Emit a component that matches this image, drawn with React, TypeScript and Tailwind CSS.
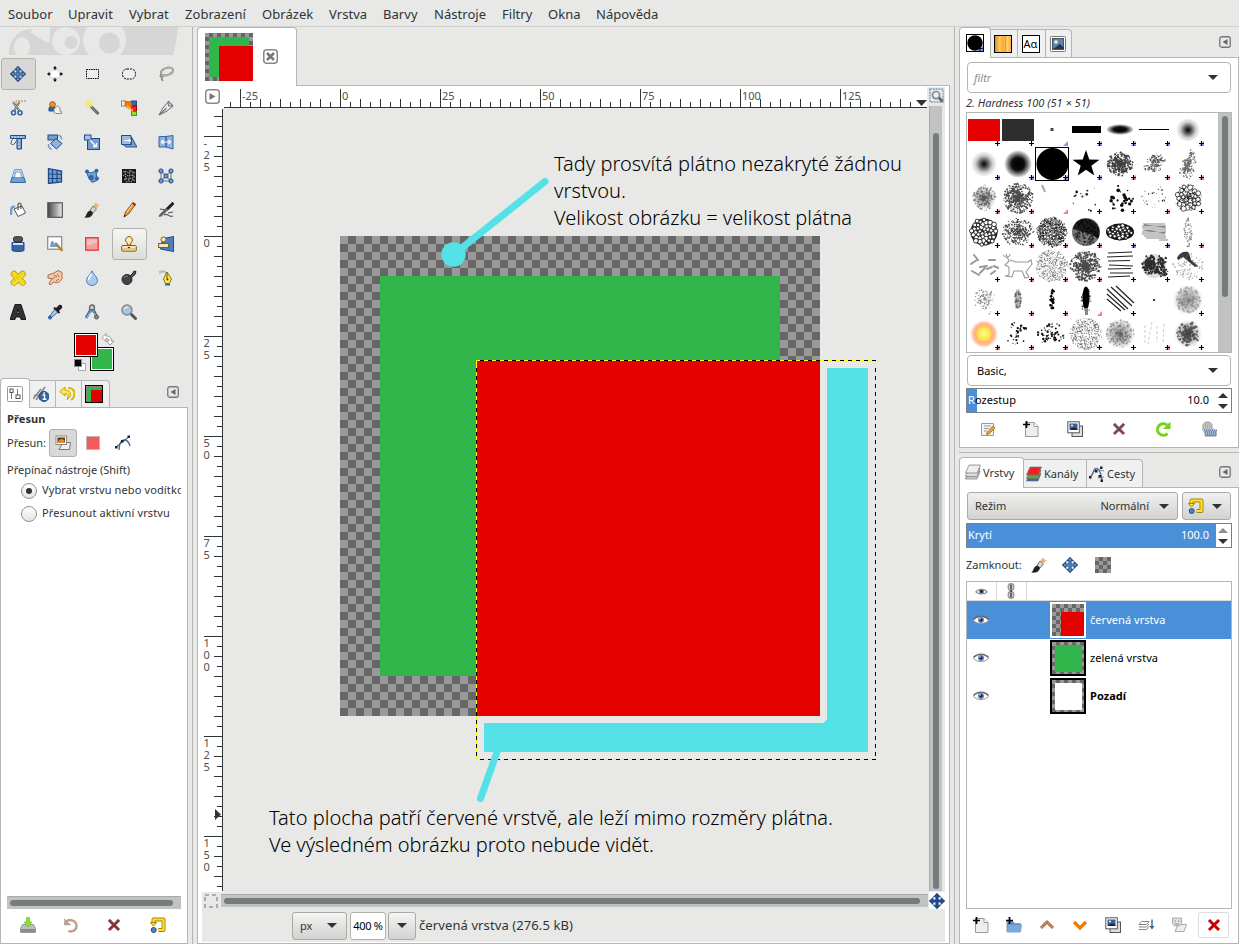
import React from "react";

type Kids = { children?: React.ReactNode };

function Ico({ children, s = 16 }: Kids & { s?: number }) {
  return (
    <svg width={s} height={s} viewBox="0 0 16 16" fill="none" className="block shrink-0">
      {children}
    </svg>
  );
}

const B = "#204a87";
const L = "#729fcf";

function Checker({ id, size }: { id: string; size: number }) {
  return (
    <pattern id={id} width={size * 2} height={size * 2} patternUnits="userSpaceOnUse">
      <rect width={size * 2} height={size * 2} fill="#999" />
      <rect x={size} width={size} height={size} fill="#666" />
      <rect y={size} width={size} height={size} fill="#666" />
    </pattern>
  );
}

/* ---------- icons ---------- */

const MoveIcon = ({ s, fill = L }: { s?: number; fill?: string }) => (
  <Ico s={s}>
    <path d="M8 .6 11 3.8H9V7h3.2V5l3.2 3-3.2 3V9H9v3.2h2L8 15.4 5 12.2h2V9H3.8v2L.6 8l3.2-3v2H7V3.8H5z" fill={fill} stroke={B} strokeWidth="1.1" />
  </Ico>
);
const AlignIcon = () => (
  <Ico>
    <rect x="3.500" y="4.500" width="9" height="7" fill="#fff" stroke="#ddd" />
    <path d="M8 0 10 2.500H6zM8 16l2-2.500H6zM0 8l2.500-2v4zM16 8l-2.500-2v4z" fill="#000" />
    <path d="M8 2v2M8 12v2M2 8h1.500M12.500 8H14" stroke="#000" />
  </Ico>
);
const RectSel = () => (
  <Ico>
    <rect x="2.500" y="3.500" width="12" height="9" fill="#eee" stroke="#000" strokeDasharray="1.500 .8" />
  </Ico>
);
const EllipseSel = () => (
  <Ico>
    <rect x="1.500" y="3" width="13" height="10" rx="4.500" fill="#eee" stroke="#000" strokeDasharray="2 1" />
  </Ico>
);
const Lasso = () => (
  <Ico>
    <ellipse cx="9" cy="5.500" rx="6.300" ry="3.600" transform="rotate(-18 9 5.500)" stroke="#888a85" strokeWidth="2" />
    <ellipse cx="9" cy="5.500" rx="6.300" ry="3.600" transform="rotate(-18 9 5.500)" stroke="#d3d7cf" strokeWidth=".6" />
    <path d="M3.500 8c-3 2 0 4 2 2.500M4 10l-.5 2.500 1.500 2.500" stroke="#888a85" strokeWidth="1.500" />
  </Ico>
);
const Scissors = () => (
  <Ico>
    <path d="M6 5V1h10" stroke="#c17d11" strokeDasharray="2 1" />
    <path d="M3 2 9.500 11M9.500 2 4 11" stroke="#555753" strokeWidth="2" />
    <path d="M3 2 9.500 11M9.500 2 4 11" stroke="#d3d7cf" strokeWidth=".7" />
    <circle cx="3.500" cy="12.700" r="2" stroke="#3465a4" strokeWidth="1.600" />
    <circle cx="10" cy="12.700" r="2" stroke="#3465a4" strokeWidth="1.600" />
  </Ico>
);
const Foreground = () => (
  <Ico>
    <path d="M2 10V8c0-2 6-2 7 0v3H2z" fill="#3465a4" stroke={B} />
    <circle cx="5.500" cy="4.500" r="2.800" fill="#f5913e" stroke="#8f5902" />
    <path d="M7 12.500V9l2-2c2-2 4 0 4 2v2l1.500.5v2h-6z" fill="#eee" stroke="#888a85" />
  </Ico>
);
const Wand = () => (
  <Ico>
    <circle cx="5" cy="4" r="4" fill="#fce94f" opacity=".35" />
    <path d="M7 6.500 14.500 14" stroke="#555753" strokeWidth="2.800" />
    <path d="m6.500 6 7.500 7.500" stroke="#babdb6" strokeWidth=".8" />
    <path d="M5 0v8M1 4h8M2.200 1.200l5.600 5.600M7.800 1.200 2.200 6.800" stroke="#fce94f" strokeWidth=".9" />
  </Ico>
);
const ByColor = () => (
  <Ico>
    <rect x=".5" y="1" width="4" height="5" fill="#eee" stroke="#888a85" />
    <rect x="10.500" y="1" width="5" height="4.500" fill="#3465a4" stroke={B} />
    <rect x="10.500" y="6" width="5" height="5" fill="#ef2929" stroke="#a40000" />
    <rect x="10.500" y="11.500" width="5" height="4" fill="#8ae234" stroke="#4e9a06" />
    <path d="M4 1.500h6l1 5-4 2-3-3z" fill="#f57900" stroke="#ce5c00" strokeWidth=".7" />
    <path d="m6 6 6 5" stroke="#fcaf3e" strokeWidth="2" />
  </Ico>
);
const PathPen = () => (
  <Ico>
    <path d="m1 15 4-7 5-6 .5 4L15 6l-6 5z" fill="#eee" stroke="#666" />
    <path d="M2 14.500 8.500 8M10 1l5 5" stroke="#777" strokeWidth="1.200" />
  </Ico>
);
const Crop = () => (
  <Ico>
    <path d="M.5 1.500h15v3H.5z" fill={L} stroke={B} />
    <path d="M7 4.500V15h4.500V4.500z" fill={L} stroke={B} />
    <path d="M2.500 5.500c-2 3-2 5 0 5s3-2 4-4" fill="#eee" stroke={B} />
    <path d="M1 3h13M9 6v8" stroke="#dce8f6" strokeDasharray="2 1" />
  </Ico>
);
const Rotate = () => (
  <Ico>
    <rect x="1" y="1" width="9.500" height="5" fill={L} stroke={B} />
    <path d="m9 4.500 6 5-5.500 5.500-6-5.500z" fill="#8fb3df" stroke={B} />
    <path d="M11.500 1.500c3 0 3 2 3 4M1.500 10c0 4 1 5 3.500 5" stroke={L} strokeWidth="1.600" />
  </Ico>
);
const Scale = () => (
  <Ico>
    <rect x="3.500" y="4.500" width="12" height="11" fill={L} stroke={B} />
    <rect x=".5" y="1" width="6.500" height="5" fill="#a7c4e6" stroke={B} />
    <path d="m6 6 6 6.500M12.500 9v3.500H9" stroke="#fff" strokeWidth="1.300" />
  </Ico>
);
const Shear = () => (
  <Ico>
    <path d="M.5 1.500h9.500v9H.5z" fill="#9bbce3" stroke={B} />
    <path d="M2 10.500 5 13h11L10.500 3v7.500z" fill={L} stroke={B} strokeWidth=".9" />
    <path d="M3.500 6.500h6M8 5l2 1.500L8 8" stroke="#fff" />
  </Ico>
);
const Flip = () => (
  <Ico>
    <path d="M1 2.500h7V13H1zM8 2.500l7-1v13.500l-7-2z" fill="#8fb3df" stroke="#3465a4" />
    <path d="M4 8h8M5.500 6 3.500 8l2 2M10.500 6l2 2-2 2" stroke="#fff" strokeWidth="1.200" />
  </Ico>
);
const Perspective = () => (
  <Ico>
    <path d="M4.500 1.500h7l2.500 8.500H2z" fill="#c5d8ee" stroke={L} />
    <path d="M2 9.500h12l1.500 5H.5z" fill={L} stroke="#3465a4" />
    <path d="M5.500 4h5l1 5.500h-7z" fill="#fff" stroke={L} />
  </Ico>
);
const Unified = () => (
  <Ico>
    <path d="m1.500 .7 13 2.300v11l-13 1.500z" fill={L} stroke={B} strokeWidth="1.300" />
    <path d="M5.500 1.500V15M10 2v12.500M1.500 6l13 .5M1.500 10.500h13" stroke={B} strokeWidth="1.200" />
  </Ico>
);
const Cage = () => (
  <Ico>
    <path d="M3 3.500c3 2 6 1 9-1l1 10-5 2C6 11 3 9 3 3.500z" fill={L} stroke="#3465a4" />
    <circle cx="3" cy="3.500" r="2" fill="#3465a4" />
    <circle cx="12.500" cy="2.700" r="2" fill="#3465a4" />
    <circle cx="13" cy="10.500" r="2" fill="#3465a4" />
    <circle cx="7" cy="9.500" r="2.600" fill="#3465a4" />
  </Ico>
);
const Warp = () => (
  <Ico>
    <rect x="1" y="1" width="14" height="14" fill="#1b1b1b" />
    <path d="m2 4 3-1 2 2 3-2 4 2M2 8l2-2 3 2 3-1 4 2M3 12l2-2 3 2 2-2 4 3M5 14l3-1 3 1M4 3l1 10M9 2l-1 9M12 4v9" stroke="#bbb" strokeWidth=".9" strokeDasharray="1.500 1" />
  </Ico>
);
const Handle = () => (
  <Ico>
    <path d="M3 3v10M13 3v10M3 3l10 10M13 3 3 13M3 13h10" stroke="#999" strokeWidth="1.500" />
    {[[3, 3], [13, 3], [3, 13], [13, 13], [8, 8]].map(([x, y]) => (
      <circle key={`${x}${y}`} cx={x} cy={y} r="2.100" fill={L} stroke={B} />
    ))}
  </Ico>
);
const Bucket = () => (
  <Ico>
    <path d="M5 5C1 4 1 7 1 13" stroke={L} strokeWidth="2.500" />
    <path d="m4 7 8-3 3.500 7L8 14.500z" fill="#fff" stroke="#555" />
    <path d="M8 8V2.500c0-2 3-2 3 0V7" stroke="#555" strokeWidth="1.200" />
  </Ico>
);
const Gradient = () => (
  <Ico>
    <defs>
      <linearGradient id="gr">
        <stop stopColor="#444" />
        <stop offset="1" stopColor="#eee" />
      </linearGradient>
    </defs>
    <rect x=".8" y=".8" width="14.500" height="14.500" fill="url(#gr)" stroke="#555" strokeWidth="1.200" />
  </Ico>
);
const Brush = () => (
  <Ico>
    <path d="m11.500.5 3.800 3.200-3 2.800L9.500 4z" fill="#e9b96e" />
    <path d="m9 4 3.500 3-3.500 4-3-2.500z" fill="#d3d7cf" stroke="#777" />
    <path d="M6.500 8.500 9 11c-1 4.500-5 5-9 4.500 3-1 2-6.500 6.500-7z" fill="#222" />
  </Ico>
);
const Pencil = () => (
  <Ico>
    <path d="m3 15 1.500-5L11 1.500 14 3 7.500 12z" fill="#e0a13c" stroke="#8f5902" />
    <path d="m11 1.500 1-1 2.500 1.500-.5 1.500z" fill="#ef2929" stroke="#a40000" strokeWidth=".8" />
    <path d="m6 10 6-8" stroke="#fce0a0" />
    <path d="m2.700 15.300.8-2.500 1.500 1z" fill="#222" />
  </Ico>
);
const Airbrush = () => (
  <Ico>
    <path d="m15.500.8-7 7" stroke="#222" strokeWidth="3" />
    <path d="m9 7-7 7" stroke="#777" strokeWidth="3" />
    <path d="m8 8-7 6.500M2 7l6 1M6 13c4-3 4 3 9 1M10 11l5-1" stroke="#555" strokeWidth="1.200" />
  </Ico>
);
const Ink = () => (
  <Ico>
    <path d="M2 6.500h12v8c-3 1.500-9 1.500-12 0z" fill="#3465a4" stroke={B} />
    <rect x="3.500" y=".8" width="9" height="5" rx="2" fill="#555753" stroke="#222" />
    <path d="M3 8h10" stroke="#cfe0f5" strokeWidth="2" />
  </Ico>
);
const MyPaint = () => (
  <Ico>
    <rect x=".7" y=".7" width="14" height="12.500" fill="#fff" stroke="#888" strokeWidth="1.200" />
    <path d="M3 11c1-7 2-8 4-4s1 2 4 0l-1 4z" fill={L} />
    <path d="m9 8 6.500 7" stroke="#c17d11" strokeWidth="2.400" />
    <path d="m8 7 3 3" stroke="#888" strokeWidth="2.400" />
  </Ico>
);
const Eraser = () => (
  <Ico>
    <rect x="1.700" y="1.700" width="12.500" height="12.500" fill="#f0a0a0" stroke="#ef2929" strokeWidth="1.200" />
    <path d="M3 3.500h10v3L3 10z" fill="#f7c0c0" />
  </Ico>
);
const Stamp = () => (
  <Ico>
    <rect x=".7" y="9.500" width="14.600" height="5.700" rx="1" fill="#f7e6b8" stroke="#8f5902" />
    <path d="M6.500 9 6 6.500c-3-1.500-1-6 2-6s5 4.500 2 6L9.500 9z" fill="#fbe9b7" stroke="#8f5902" />
    <path d="M1 13h14" stroke="#c9a64e" />
    <path d="m6.500 11 1.500 1.500L9.500 11z" fill="#222" />
  </Ico>
);
const PerspClone = () => (
  <Ico>
    <path d="m6 2.500 9.500-2V15.500l-13-2.500V9z" fill="#4b7fc0" stroke={B} />
    <rect x=".6" y="7.500" width="10" height="4" fill="#f7e6b8" stroke="#8f5902" />
    <circle cx="5.500" cy="3.500" r="2.500" fill="#fbe9b7" stroke="#8f5902" />
    <path d="M5.500 5.500v2" stroke="#8f5902" strokeWidth="2.500" />
  </Ico>
);
const Heal = () => (
  <Ico>
    <path d="m4 4 8.500 8.500M12.500 4 4 12.500" stroke="#c4a000" strokeWidth="6.600" strokeLinecap="round" />
    <path d="m4 4 8.500 8.500M12.500 4 4 12.500" stroke="#f6df2c" strokeWidth="4.800" strokeLinecap="round" />
    <path d="m3 4 9 10M5 2l9 10M13 3l-9 9M11 2l-8 9" stroke="#c4a000" strokeDasharray="1 1.500" strokeWidth=".8" />
  </Ico>
);
const Smudge = () => (
  <Ico>
    <path d="M3 15 2 13l3-4-4-1V5l6-2 4-2.500 4 2v6c-2 4-5 5-8 3.500z" fill="#f3c9a5" stroke="#a0522d" strokeWidth=".8" />
    <path d="m7 5 3 2M5 9l3-2M9 11l3-2M10 4l2 3" stroke="#a0522d" strokeWidth=".8" />
  </Ico>
);
const Drop = () => (
  <Ico>
    <path d="M8 .8C9 4 13.500 7 13.500 10.500a5.500 5 0 0 1-11 0C2.500 7 7 4 8 .8z" fill="#a8cbef" stroke="#5580b0" />
    <path d="M7.500 4c-2 3-3 4-3 6" stroke="#fff" strokeWidth="1.500" />
  </Ico>
);
const Dodge = () => (
  <Ico>
    <circle cx="6" cy="9.500" r="5" fill="#444" stroke="#222" />
    <path d="m9 6 3-3 1-2 2 .5-1 3-3.500 3z" fill="#555" stroke="#222" />
    <path d="M3 8c1-2 3-2 4-2" stroke="#888" />
  </Ico>
);
const Ink2 = () => (
  <Ico>
    <path d="M1 4c5-4 8-3 9 5M1 2c4-2 7-1 9 3" stroke="#aaa" />
    <path d="m9 2 4.500 7-2 4.500h-4L5.500 9z" fill="#fce94f" stroke="#8f7000" />
    <path d="M9 3v6" stroke="#555" />
    <circle cx="9.500" cy="9.500" r="1" fill="#333" />
    <rect x="7" y="13.500" width="5" height="2" fill="#3465a4" />
  </Ico>
);
const TextTool = () => (
  <Ico>
    <path d="M5 .5h6L16 15.500h-5l-.8-2.500H5.800L5 15.500H0zM8 5 6.800 9.500h2.400z" fill="#333" stroke="#000" strokeWidth=".8" fillRule="evenodd" />
  </Ico>
);
const Picker = () => (
  <Ico>
    <path d="m8 5 4-4c2-1 4 1 3 3l-4 4z" fill="#222" />
    <path d="m8 5 3 3-6 5-2 2-1-1 1.500-3z" fill="#a8cbef" stroke="#3465a4" />
    <circle cx="3" cy="13.500" r="2" fill="#3465a4" />
    <path d="m7 3.500 5.500 5.500" stroke="#222" strokeWidth="2" />
  </Ico>
);
const Measure = () => (
  <Ico>
    <path d="M7 5 2 14M9 5l4 8" stroke="#3465a4" strokeWidth="2.600" />
    <path d="M7 6 2 15M9 6l4 8" stroke="#b8cde8" strokeWidth=".9" />
    <circle cx="8" cy="3.500" r="2.500" fill="#ccc" stroke="#666" strokeWidth="1.300" />
    <path d="M3 10c3-3 7-3 9 0" stroke="#777" />
    <circle cx="12.500" cy="13" r="2" fill="#888" stroke="#555" />
  </Ico>
);
const Zoom = () => (
  <Ico>
    <path d="m10 10 4.500 4.500" stroke="#555" strokeWidth="3" strokeLinecap="round" />
    <circle cx="6" cy="6" r="5" fill="#a9c3e3" stroke="#888a85" strokeWidth="1.500" />
    <path d="M3 5.500C4 3 6 3 7 3" stroke="#e5eefa" strokeWidth="1.200" />
  </Ico>
);
const PathIcon = () => (
  <Ico>
    <path d="m1 12 14-11" stroke="#222" />
    <path d="M4 15C4 9 6 5 9 5s5 2 6 6" stroke="#3465a4" strokeWidth="1.300" />
    <path d="M0 11h2.500v2.500H0zM6 5h2.500v2.500H6zM12.500.5H15V3h-2.500z" fill="#222" />
  </Ico>
);
const PathTabIcon = () => (
  <Ico>
    <path d="M1 11C4 10 4 3 7 2.500S12 8 13 14" stroke="#3465a4" strokeWidth="1.300" />
    <path d="m1 12 6-9 8 2M9 12l6-1" stroke="#777" strokeWidth=".8" />
    <path d="M0 10h2.500v2.500H0zM6 4h2.500v2.500H6zM11 .5h2.500V3H11zM9.500 9H12v2.500H9.500zM11.500 13.500H14V16h-2.500z" fill="#222" />
  </Ico>
);
const ToolOptions = () => (
  <Ico>
    <rect x=".5" y=".5" width="15" height="15" rx="1" fill="#fff" stroke="#999" />
    <path d="M4.500 7v6M10.500 3v6" stroke="#777" />
    <rect x="3" y="3" width="3" height="3.500" stroke="#555" />
    <rect x="9" y="9" width="4" height="3.500" stroke="#555" />
  </Ico>
);
const DeviceStatus = () => (
  <Ico>
    <path d="m0 13 8-10M3 14 12 1M1 10c3-3 6 0 6 4" stroke="#888" strokeWidth="1.600" />
    <circle cx="11" cy="10.500" r="5" fill="#3465a4" stroke={B} />
    <path d="M9.500 9h2v4M9.500 13.300h4M10.500 7h1.500" stroke="#fff" strokeWidth="1.400" />
  </Ico>
);
const UndoHist = () => (
  <Ico>
    <path d="M6 1 .8 5.500 6 10V7.500c3 0 4 2 2 6 5-3 5-9-2-9.500z" fill="#fce94f" stroke="#c4a000" />
    <path d="M9 2c8 0 8 9 3 12" stroke="#d9b800" strokeWidth="2" />
  </Ico>
);
const LayerMove = () => (
  <Ico>
    <path d="M4 14.500h10.500l1-7H8z" fill="#eee" stroke="#777" />
    <rect x="1" y="1" width="10.500" height="8.500" fill="#fff" stroke="#888" />
    <rect x="2.500" y="2.500" width="7.500" height="5.500" fill="#5c3a15" />
    <path d="M3 7c1-3 4-4 6-2l1 3H3z" fill="#e08a2a" />
  </Ico>
);
const SelMove = () => (
  <Ico>
    <rect x="1.500" y="1.500" width="13" height="13" fill="#f75a5a" />
    <rect x="1.500" y="1.500" width="13" height="13" stroke="#fff" />
    <rect x="1.500" y="1.500" width="13" height="13" stroke="#777" strokeDasharray="1 1" />
  </Ico>
);
const Save = () => (
  <Ico>
    <path d="M2.500 7.500h11l2 4v4h-15v-4z" fill="#bbb" stroke="#999" />
    <path d="M1 12h14v3H1z" fill="#8a8c88" />
    <path d="M6.500.5h3V5H12l-4 5-4-5h2.500z" fill="#8ae234" stroke="#6cbb2a" strokeWidth=".7" />
  </Ico>
);
const Undo = () => (
  <Ico>
    <path d="M3 4.500c4-3 10.500-1 10.500 4.500s-6 6-8 5" stroke="#cfa58a" strokeWidth="2.400" />
    <path d="M1.500 2v6H8z" fill="#c4a08c" />
    <path d="M3 4.500c4-3 10.500-1 10.500 4.500s-6 6-8 5M1.500 2v6H8" stroke="#888" strokeWidth=".8" strokeDasharray="1 1" />
  </Ico>
);
const Cross = ({ c, d }: { c: string; d?: string }) => (
  <Ico>
    <path d="m3 3 10 10M13 3 3 13" stroke={c} strokeWidth="3" />
    {d && <path d="m3 3 10 10M13 3 3 13" stroke={d} strokeWidth="2.200" strokeDasharray="1 1" />}
  </Ico>
);
const Reset = () => (
  <Ico>
    <path d="M3.500 6V2.500h10v10.500H8.500" stroke="#a88500" strokeWidth="4" strokeLinejoin="round" />
    <path d="M3.500 6V2.500h10v10.500H8.500" stroke="#fce032" strokeWidth="2.200" strokeLinejoin="round" />
    <path d="M.3 5.500h6.400L3.500 9z" fill="#fce032" stroke="#a88500" />
    <circle cx="3.700" cy="13" r="2.500" fill="#5583bd" stroke={B} />
  </Ico>
);
const Edit = () => (
  <Ico>
    <path d="M1.500 2.500h12v12h-12z" fill="#f3f3f3" stroke="#999" />
    <path d="M4 5h7M4 7.500h5M4 10h3" stroke="#999" />
    <path d="m7 11.500 6-6.500 2 2-6 6-2.500.5z" fill="#e9a83e" stroke="#8f5902" strokeWidth=".7" />
  </Ico>
);
const NewDoc = () => (
  <Ico>
    <path d="M2.500 1.500h8.500l4 4v10H2.500z" fill="#eee" stroke="#999" />
    <path d="M11 1.500v4h4" fill="#fff" stroke="#999" />
    <path d="M3.500 0v7M0 3.500h7" stroke="#000" strokeWidth="1.700" />
  </Ico>
);
const Folder = () => (
  <Ico>
    <path d="M1 4.500h6l1.500 2h6v8.500H1z" fill="#5a89c0" stroke="#7d9fc5" />
    <path d="M2.500 7.500H16l-1 7.500H1z" fill="#77a7dc" />
    <path d="M3.500 0v7M0 3.500h7" stroke="#000" strokeWidth="1.700" />
  </Ico>
);
const Duplicate = () => (
  <Ico>
    <rect x="5" y="5" width="10.500" height="10.500" fill="#ddd" stroke="#555" />
    <rect x=".8" y=".8" width="11.500" height="11" fill="#fff" stroke="#555" />
    <rect x="2.500" y="2.500" width="8" height="6.500" fill="#3b5f95" />
    <path d="M3 9c2-3 5-3 7.500-1v1z" fill="#1a2a45" />
    <circle cx="5" cy="4.500" r="1" fill="#fff" />
  </Ico>
);
const Refresh = () => (
  <Ico>
    <path d="M12.500 12.500A5.800 5.800 0 1 1 12 4" stroke="#73d216" strokeWidth="3" />
    <path d="M15.500.5v7.500H8z" fill="#73d216" />
  </Ico>
);
const BrushImg = () => (
  <Ico>
    <path d="M1 9V5.500a5.500 5 0 0 1 11 0v2l2 1v1z" fill="#a8a8a8" />
    <path d="M2 8.500h14v5c0 1.500-1 2-2 2H4z" fill="#6f8ab5" />
    <path d="M1.500 3h11M1 5h12M1 7h13M2 9h14M3 11h13M3 13h13" stroke="#fff" strokeWidth=".8" strokeDasharray="1 1" />
  </Ico>
);
const Up = () => (
  <Ico>
    <path d="m2 11 6-6 6 6" stroke="#a8663a" strokeWidth="3" />
    <path d="m2 11 6-6 6 6" stroke="#edb584" strokeWidth="1.200" strokeDasharray="1 1" />
  </Ico>
);
const Down = () => (
  <Ico>
    <path d="m2 5 6 6 6-6" stroke="#f57900" strokeWidth="3.200" />
  </Ico>
);
const Layers = ({ top = "#eee", mid = "#ddd", bot = "#ccc" }) => (
  <Ico>
    <path d="M3.500 7.500H15l-3 7.500H.5z" fill={bot} stroke="#777" strokeWidth=".7" />
    <path d="M3.500 4.500H15l-3 8H.5z" fill={mid} stroke="#777" strokeWidth=".7" />
    <path d="M4 1h11.500L12 9H.5z" fill={top} stroke="#777" strokeWidth=".7" />
  </Ico>
);
const Merge = () => (
  <Ico>
    <path d="M3.500 4.500H11l-2.500 3H.8zM.8 10h7.700L11 7M.8 12.500h7.700l2.500-3" stroke="#888" />
    <path d="M14 2.500v8" stroke="#3465a4" strokeWidth="1.400" />
    <path d="M11.500 9h5L14 12.500z" fill="#3465a4" />
  </Ico>
);
const Mask = () => (
  <Ico>
    <path d="M4 14.500h9l2.500-7H7z" fill="#eee" stroke="#aaa" />
    <path d="M1.500 1h9v5c0 4-9 4-9 0z" fill="#dfe2da" stroke="#aaa" />
    <path d="M3.500 4h1.500M7 4h1.500M4 6.500c1 1 3 1 4 0" stroke="#888" />
  </Ico>
);
const Eye = () => (
  <Ico>
    <path d="M.5 8.500C4 3.500 12 3.500 15.500 8.500 12 12.500 4 12.500.5 8.500z" fill="#fff" stroke="#999" />
    <path d="M.5 7.500C4 3 12 3 15.500 7.500" stroke="#666" strokeWidth="1.300" />
    <circle cx="8" cy="8" r="3" fill="#5c86bb" />
    <circle cx="8" cy="7.800" r="1.600" fill="#0b1f40" />
    <circle cx="7.200" cy="7" r=".7" fill="#fff" />
  </Ico>
);
const Chain = () => (
  <Ico>
    <rect x="5.500" y="1" width="5" height="6" rx="2" stroke="#999" strokeWidth="1.800" />
    <rect x="5.500" y="9" width="5" height="6" rx="2" stroke="#999" strokeWidth="1.800" />
    <path d="M8 2v4M8 10v4M7 8h2" stroke="#555" strokeWidth="1.800" />
  </Ico>
);
const CheckIcon = () => (
  <svg width="16" height="16" className="block" shapeRendering="crispEdges">
    <defs>
      <Checker id="ck16" size={4} />
    </defs>
    <rect width="16" height="16" fill="url(#ck16)" />
  </svg>
);
const Pattern = () => (
  <svg width="18" height="18" className="block">
    <defs>
      <linearGradient id="wood">
        <stop stopColor="#d98a1e" />
        <stop offset=".3" stopColor="#ffc95c" />
        <stop offset=".5" stopColor="#f8a93a" />
        <stop offset=".75" stopColor="#ffcf68" />
        <stop offset="1" stopColor="#f7ab45" />
      </linearGradient>
    </defs>
    <rect x=".5" y=".5" width="17" height="17" fill="url(#wood)" stroke="#000" />
    <path d="M11.500 1v16" stroke="#f0952e" />
  </svg>
);
const Picture = () => (
  <Ico>
    <rect x=".5" y=".5" width="15" height="15" rx="1" fill="#fff" stroke="#777" />
    <rect x="2.500" y="2.500" width="11" height="11" fill="#5c83b5" stroke="#456" />
    <circle cx="6" cy="6" r="1.800" fill="#fdf6b0" />
    <path d="m3 13 7-5 3.500 3.500V13z" fill="#25354c" />
  </Ico>
);
const Thumb = ({ s }: { s: number }) => (
  <svg width={s} height={s} viewBox="0 0 48 48" shapeRendering="crispEdges" className="block">
    <defs>
      <Checker id={`th${s}`} size={4} />
    </defs>
    <rect width="48" height="48" fill={`url(#th${s})`} />
    <rect x="4" y="4" width="40" height="40" fill="#31b64b" />
    <rect x="14" y="12.500" width="34" height="35.500" fill="#e50000" />
  </svg>
);
const TabMenu = () => (
  <svg width="12" height="12" className="block">
    <rect x=".75" y=".75" width="10.500" height="10.500" rx="2" fill="none" stroke="#777" strokeWidth="1.300" />
    <path d="M8.500 3v6L3.500 6z" fill="#666" />
  </svg>
);
const Caret = ({ up = false, c = "#2e3436" }: { up?: boolean; c?: string }) => (
  <svg width="10" height="5" className="block shrink-0">
    <path d={up ? "M0 5h10L5 0z" : "M0 0h10L5 5z"} fill={c} />
  </svg>
);
const SpinArrows = ({ dim = false }: { dim?: boolean }) => (
  <div className="flex w-[15px] flex-col items-center justify-center gap-[6px] bg-white pr-px">
    <Caret up c={dim ? "#8b8e8f" : "#2e3436"} />
    <Caret />
  </div>
);

/* ---------- left column ---------- */

const tools: React.ReactNode[] = [
  <MoveIcon />, <AlignIcon />, <RectSel />, <EllipseSel />, <Lasso />,
  <Scissors />, <Foreground />, <Wand />, <ByColor />, <PathPen />,
  <Crop />, <Rotate />, <Scale />, <Shear />, <Flip />,
  <Perspective />, <Unified />, <Cage />, <Warp />, <Handle />,
  <Bucket />, <Gradient />, <Brush />, <Pencil />, <Airbrush />,
  <Ink />, <MyPaint />, <Eraser />, <Stamp />, <PerspClone />,
  <Heal />, <Smudge />, <Drop />, <Dodge />, <Ink2 />,
  <TextTool />, <Picker />, <Measure />, <Zoom />,
];

function Radio({ on, children }: Kids & { on?: boolean }) {
  return (
    <div className="flex h-[23px] items-center gap-[5px] pl-[14px]">
      <span className="flex h-4 w-4 shrink-0 items-center justify-center rounded-full border border-[#8f918e] bg-linear-to-b from-white to-[#e4e4e2]">
        {on && <span className="h-[6px] w-[6px] rounded-full bg-[#2e3436]" />}
      </span>
      <span className="h-[17px] w-[139px] overflow-hidden leading-[15px] tracking-[.12px] whitespace-nowrap">{children}</span>
    </div>
  );
}

function ToolColumn() {
  return (
    <div className="flex h-[917px] w-[193px] shrink-0 flex-col border-r border-[#b5b5b3]">
      <svg width="180" height="30" viewBox="0 27 180 30" className="block shrink-0">
        <path d="M9 55C8 32 33 18 50 41V27h128c-1 11-3 21-5 28z" fill="#d6d6d6" />
        <ellipse cx="22" cy="47" rx="8" ry="10" fill="#e8e8e6" />
        <path d="M27 34c10-2 15 9 23 9V27H38z" fill="#e8e8e6" />
        <path d="M26 33c9-3 15 12 25 9l22 13H36C35 45 32 38 26 33z" fill="#d6d6d6" />
        <circle cx="66" cy="41" r="14" fill="#e8e8e6" />
        <circle cx="71" cy="42.500" r="6.500" fill="#d6d6d6" />
        <circle cx="104.500" cy="40" r="21.500" fill="#e8e8e6" />
        <circle cx="109.500" cy="43" r="10.500" fill="#d6d6d6" />
        <rect y="55" width="180" height="2" fill="#e8e8e6" />
      </svg>
      <div className="grid grid-cols-[repeat(5,37px)] auto-rows-[34px]">
        {tools.map((t, i) => (
          <div key={i} className="flex items-center pl-px">
            <div
              className={
                "flex h-8 w-[35px] items-center justify-center rounded-[3px] pr-px " +
                (i === 0 ? "border border-[#b1b1ae] bg-[#d8d8d6]" : i === 28 ? "border border-[#b1b1ae] bg-linear-to-b from-[#f6f6f5] to-[#dcdcda]" : "")
              }
            >
              {t}
            </div>
          </div>
        ))}
      </div>
      <svg width="180" height="49" viewBox="0 329 180 49" className="block shrink-0">
        <rect x="90.500" y="347.500" width="23" height="23" fill="#31b64b" stroke="#000" />
        <rect x="91.500" y="348.500" width="21" height="21" fill="none" stroke="#fff" />
        <rect x="74.500" y="333.500" width="23" height="23" fill="#e50000" stroke="#000" />
        <rect x="75.500" y="334.500" width="21" height="21" fill="none" stroke="#fff" />
        <rect x="78.500" y="363.500" width="7" height="7" fill="#fff" stroke="#aaa" />
        <rect x="74.500" y="359.500" width="7" height="7" fill="#000" stroke="#888" />
        <path d="m102 337.500 4-4v2.500c4 0 5.500 2 5.500 5h2.500l-4 4-4-4h3c0-1.500-1-2.500-3-2.500v3z" fill="#fff" stroke="#999" />
      </svg>
      <div className="flex h-[29px] w-[188px] items-end">
        <div className="z-10 -mb-px flex h-[30px] w-[30px] items-center justify-center rounded-t-[4px] border border-b-0 border-[#b5b5b3] bg-white"><ToolOptions /></div>
        <div className="flex h-[27px] w-[26px] items-center justify-center border-t border-r border-[#b5b5b3] bg-[#f0f0f0] pr-1"><DeviceStatus /></div>
        <div className="flex h-[27px] w-[26px] items-center justify-center border-t border-r border-[#b5b5b3] bg-[#f0f0f0] pr-1"><UndoHist /></div>
        <div className="flex h-[27px] w-[28px] items-center justify-center rounded-tr-[4px] border-t border-r border-[#b5b5b3] bg-[#f0f0f0] pr-[3px]">
          <div className="border border-black"><Thumb s={16} /></div>
        </div>
        <div className="flex h-[29px] grow items-center justify-end pr-[9px] pb-px"><TabMenu /></div>
      </div>
      <div className="flex w-[188px] grow flex-col border border-[#b5b5b3] bg-white px-[6px]">
        <div className="flex h-[21px] items-center font-bold tracking-[.1px]">Přesun</div>
        <div className="flex h-[28px] items-center">
          <span className="w-[42px] pb-px">Přesun:</span>
          <div className="flex h-7 w-7 items-center justify-center rounded-[3px] border border-[#b1b1ae] bg-[#d8d8d6] pr-px"><LayerMove /></div>
          <div className="pl-2"><SelMove /></div>
          <div className="pl-[14px]"><PathIcon /></div>
        </div>
        <div className="flex h-[22px] items-center pt-[3px]">Přepínač nástroje (Shift)</div>
        <Radio on>Vybrat vrstvu nebo vodítko</Radio>
        <Radio>Přesunout aktivní vrstvu</Radio>
        <div className="mt-auto flex h-[13px] items-center border-t border-[#a9abaa] bg-[#c1c3c2] px-[3px]">
          <div className="h-[6px] w-[163px] rounded-full bg-[#777b7b]" />
        </div>
        <div className="flex h-[34px] items-center pb-[2px] pl-[13px]">
          <Save />
          <div className="pl-[27px]"><Undo /></div>
          <div className="pl-[27px]"><Cross c="#b33" d="#444" /></div>
          <div className="pl-[28px]"><Reset /></div>
        </div>
      </div>
    </div>
  );
}

/* ---------- image window ---------- */

const marks = [-25, 0, 25, 50, 75, 100, 125, 150];

function HRuler() {
  const ticks = [];
  for (let k = -11; k <= 57; k++) {
    const top = k % 10 === 0 ? 89 : k % 2 === 0 ? 99 : 102;
    ticks.push(<rect key={k} x={340 + 10 * k} y={top} width="1" height={107 - top} fill="#2e3436" />);
  }
  return (
    <svg width="703" height="22" viewBox="224 86 703 22" className="block bg-white">
      {ticks}
      <rect x="224" y="107" width="703" height="1" fill="#2e3436" />
      {marks.slice(0, 7).map((m) => (
        <text key={m} x={342 + 4 * m} y="100" fontSize="11" className="fill-[#4c5052]">{m}</text>
      ))}
      <path d="M916 100h11l-5.500 6z" fill="#2e3436" />
    </svg>
  );
}

function VRuler() {
  const ticks = [];
  for (let k = -12; k <= 65; k++) {
    const left = k % 10 === 0 ? 204 : k % 2 === 0 ? 214 : 217;
    ticks.push(<rect key={k} x={left} y={236 + 10 * k} width={222 - left} height="1" fill="#2e3436" />);
  }
  return (
    <svg width="26" height="784" viewBox="198 108 26 784" className="block bg-white">
      {ticks}
      <rect x="222" y="109" width="1" height="782" fill="#2e3436" />
      <rect x="223" y="108" width="1" height="784" fill="#e8e8e6" />
      {marks.map((m) => {
        const digits = String(m).split("");
        return (
          <text
            key={m}
            x={digits.map(() => 203.5).join(" ")}
            y={digits.map((_, i) => 247 + 4 * m + 12 * i).join(" ")}
            fontSize="11"
            className="fill-[#4c5052]"
          >
            {m}
          </text>
        );
      })}
      <path d="M215 809v11l6-5.500z" fill="#2e3436" />
    </svg>
  );
}

function Canvas() {
  return (
    <svg width="703" height="784" viewBox="224 108 703 784" className="block bg-[#e8e8e6]">
      <defs>
        <pattern id="cv" x="340" y="236" width="16" height="16" patternUnits="userSpaceOnUse">
          <path d="M0 0h16v16H0z" fill="#999" />
          <path d="M8 0h8v8H8zM0 8h8v8H0z" fill="#666" />
        </pattern>
      </defs>
      <g shapeRendering="crispEdges">
        <rect x="340" y="236" width="480" height="480" fill="url(#cv)" />
        <rect x="380" y="276" width="400" height="400" fill="#31b64b" />
        <rect x="476" y="360" width="344" height="356" fill="#e50000" />
        <path d="M827 368h41v384H484v-29h339l4-4z" fill="#55e1e8" />
        <rect x="476.500" y="360.500" width="399" height="399" fill="none" stroke="#ff0" />
        <path d="M476 360.500h400M476 759.500h400M476.500 364v396M875.500 364v396" fill="none" stroke="#000" strokeDasharray="4 4" strokeDashoffset="4" />
      </g>
      <path d="M545 181.500 453.500 254.500M497 752l-16.500 46.500" stroke="#55e1e8" strokeWidth="7" strokeLinecap="round" />
      <circle cx="453.500" cy="254.500" r="12.200" fill="#55e1e8" />
      <g fontSize="20" className="fill-black font-light">
        <text x="554" y="171" textLength="348">Tady prosvítá plátno nezakryté žádnou</text>
        <text x="554" y="198" textLength="72">vrstvou.</text>
        <text x="554" y="225" textLength="298">Velikost obrázku = velikost plátna</text>
        <text x="269" y="825" textLength="564">Tato plocha patří červené vrstvě, ale leží mimo rozměry plátna.</text>
        <text x="269" y="852" textLength="385">Ve výsledném obrázku proto nebude vidět.</text>
      </g>
    </svg>
  );
}

function ImageWindow() {
  return (
    <div className="ml-1 flex h-[917px] w-[753px] shrink-0 flex-col">
      <div className="z-10 -mb-px flex h-[59px] w-[100px] items-start gap-[10px] rounded-t-[4px] border border-b-0 border-[#b5b5b3] bg-white pt-[5px] pl-[7px]">
        <Thumb s={48} />
        <svg width="15" height="15" className="mt-[16px] block">
          <rect x=".75" y=".75" width="13.500" height="13.500" rx="3" fill="none" stroke="#888" strokeWidth="1.500" />
          <path d="m4 4 7 7M11 4l-7 7" stroke="#777" strokeWidth="2.600" />
        </svg>
      </div>
      <div className="flex h-[859px] flex-col border border-[#b5b5b3] bg-white">
        <div className="flex h-[22px]">
          <div className="flex w-[26px] pt-[3px] pl-[7px]">
            <svg width="15" height="15">
              <rect x=".75" y=".75" width="13.500" height="13.500" rx="3" fill="none" stroke="#888" strokeWidth="1.500" />
              <path d="M4.500 4v7l6-3.500z" fill="#777" />
            </svg>
          </div>
          <HRuler />
          <div className="mt-px flex w-[18px] justify-center bg-[#e8e8e6] pt-px">
            <Ico s={15}>
              <rect x="1" y="1" width="14" height="14" stroke="#729fcf" strokeWidth="1.500" strokeDasharray="2 1" />
              <circle cx="7.500" cy="7.500" r="3.800" fill="#eee" stroke="#8a8a8a" strokeWidth="1.800" />
              <path d="m10.500 10.500 4 4" stroke="#666" strokeWidth="3" />
            </Ico>
          </div>
        </div>
        <div className="flex h-[784px]">
          <VRuler />
          <Canvas />
          <div className="w-[18px] bg-[#e8e8e6] pl-[2px]">
            <div className="-mt-[2px] flex h-[785px] w-[13px] justify-center border-l border-[#a9abaa] bg-[#c1c3c2] pt-[27px]">
              <div className="h-[756px] w-[6px] rounded-full bg-[#777b7b]" />
            </div>
          </div>
        </div>
        <div className="ml-1 flex h-[17px] w-[743px] bg-[#e8e8e6]">
          <div className="flex w-[19px] items-center justify-center pr-px">
            <svg width="14" height="14"><rect x="1" y="1" width="12" height="12" fill="none" stroke="#aaaca9" strokeWidth="2" strokeDasharray="4 3" /></svg>
          </div>
          <div className="mt-[2px] flex h-[13px] w-[707px] items-center border-t border-[#a9abaa] bg-[#c1c3c2] pl-[3px]">
            <div className="h-[6px] w-[696px] rounded-full bg-[#777b7b]" />
          </div>
          <div className="ml-px flex w-4 items-center bg-white"><MoveIcon s={16} fill={B} /></div>
        </div>
        <div className="ml-1 flex h-[33px] w-[743px] items-center bg-[#e8e8e6] pl-[90px]">
          <div className="flex h-[28px] w-[55px] items-center justify-between rounded-[3px] border border-[#a9a9a6] bg-linear-to-b from-[#f4f4f3] to-[#d2d2d0] pr-[9px] pl-[7px]">px<Caret /></div>
          <div className="ml-[3px] flex h-[28px] w-[36px] items-center justify-center rounded-[3px] border border-[#b1b1ae] bg-white tracking-[-.3px] whitespace-nowrap text-black">400 %</div>
          <div className="ml-[2px] flex h-[28px] w-[28px] items-center justify-center rounded-[3px] border border-[#a9a9a6] bg-linear-to-b from-[#f4f4f3] to-[#d2d2d0] pr-px"><Caret /></div>
          <div className="pl-[3px] text-[13px] tracking-[.1px]">červená vrstva (276.5 kB)</div>
        </div>
      </div>
    </div>
  );
}

/* ---------- brushes ---------- */

function random(seed: number) {
  let v = seed * 7919 + 13;
  return () => {
    v = (v * 16807) % 2147483647;
    return v / 2147483647;
  };
}

function Spatter({ seed, n, rx = 14, ry = 14, r = 1, o = 0.7, core = 0, lumps = 0 }: { seed: number; n: number; rx?: number; ry?: number; r?: number; o?: number; core?: number; lumps?: number }) {
  const rnd = random(seed);
  rnd();
  const centers = Array.from({ length: lumps }, () => [(rnd() - 0.5) * 1.3, (rnd() - 0.5) * 1.3]);
  const dots = [];
  for (let i = 0; i < n; i++) {
    const a = rnd() * Math.PI * 2;
    let d = core ? Math.pow(rnd(), core) : Math.sqrt(rnd());
    let ox = 0;
    let oy = 0;
    if (lumps) {
      [ox, oy] = centers[i % lumps];
      d *= 0.45;
    }
    dots.push(<circle key={i} cx={17 + (ox + Math.cos(a) * d) * rx} cy={17 + (oy + Math.sin(a) * d) * ry} r={r * (0.4 + rnd() * 0.8)} />);
  }
  return <g opacity={o}>{dots}</g>;
}

function Cells({ n, rx, ry, w = 1, r = 2.5 }: { n: number; rx: number; ry: number; w?: number; r?: number }) {
  const out = [];
  for (let i = 0; i < n; i++) {
    const d = Math.sqrt((i + 0.5) / n);
    const a = i * 2.39996;
    out.push(<circle key={i} cx={17 + Math.cos(a) * d * rx} cy={17 + Math.sin(a) * d * ry} r={r * (0.85 + (i % 4) * 0.1)} />);
  }
  return <g fill="#fff" stroke="#222" strokeWidth={w}>{out}</g>;
}

const Soft = ({ r, g = "soft", ry }: { r: number; g?: string; ry?: number }) => <ellipse cx="17" cy="17" rx={r} ry={ry ?? r} fill={`url(#${g})`} />;

type BrushCell = [React.ReactNode, string];
const brushes: BrushCell[] = [
  [<rect x="1" y="6" width="32" height="22" fill="#e50000" />, "k"],
  [<rect x="1" y="6" width="32" height="22" fill="#2d2d2d" />, "k"],
  [<rect x="15.500" y="15" width="3" height="3" fill="#444" />, "B"],
  [<rect x="3" y="13" width="29" height="7" fill="#000" />, "b"],
  [<ellipse cx="17" cy="16.500" rx="14" ry="5.500" fill="url(#hard)" />, "b"],
  [<path d="M2 16.500h30" stroke="#000" />, "b"],
  [<Soft r={12} />, "b"],
  [<Soft r={13} />, "b"],
  [<Soft r={14} g="hard" />, "b"],
  [<circle cx="17.500" cy="17" r="16" />, "b"],
  [<path d="m17 3 3.300 9.500 10.200.2-8.200 6 3 9.800-8.300-5.800-8.300 5.800 3-9.800-8.200-6 10.200-.2z" />, "b"],
  [<Spatter seed={3} n={420} rx={13} ry={12} core={1.1} o={0.75} r={0.9} />, "r"],
  [<Spatter seed={4} n={170} rx={12} ry={10} r={0.7} lumps={9} />, "r"],
  [<Spatter seed={5} n={200} rx={8} ry={14} r={0.75} o={0.6} lumps={12} />, "r"],
  [<g><Soft r={12} g="gray" /><Spatter seed={6} n={230} rx={12} ry={13} o={0.45} core={1} r={0.8} /></g>, "r"],
  [<Spatter seed={7} n={520} rx={15} ry={15} core={1.2} r={0.9} />, "r"],
  [<path d="m7 4 3 7" stroke="#aaa" strokeWidth="2" />, "R"],
  [<Spatter seed={9} n={12} rx={14} ry={14} r={1.2} o={0.85} />, "k"],
  [<Spatter seed={10} n={24} rx={14} ry={13} r={1.6} o={0.95} />, "k"],
  [<Spatter seed={11} n={28} r={0.6} o={1} />, "r"],
  [<g><Cells n={30} rx={12} ry={12} r={2.3} w={0.8} /><Spatter seed={12} n={120} core={1.2} r={0.7} /></g>, "k"],
  [<g><circle cx="17" cy="17" r="13.500" fill="#222" /><Cells n={42} rx={13} ry={13} w={0.9} r={2} /></g>, "k"],
  [<Spatter seed={13} n={360} rx={16} ry={14} core={0.9} r={0.75} o={0.75} />, "r"],
  [<g><Cells n={60} rx={14} ry={14} w={0.6} r={1.5} /><Spatter seed={15} n={240} rx={15} ry={15} r={0.75} o={0.8} /></g>, "r"],
  [<g><circle cx="17" cy="17" r="14" fill="#777" /><path d="M4 14C6 4 18 0 27 8c5 6 4 12 2 16l-6-5-9-2z" opacity=".75" /><Spatter seed={16} n={150} r={0.9} o={0.7} rx={13} ry={13} /></g>, "r"],
  [<g><ellipse cx="17" cy="17" rx="14" ry="8.500" fill="#111" /><Cells n={26} rx={12.500} ry={7} w={1} r={1.600} /></g>, "b"],
  [<path d="M6 9h22M5 11h24M5 13h24M6 15h23M5 17h24M5 19h23M7 21h22M9 23h20M22 25h9M7 10l21 2M6 15l22 3" stroke="#888" strokeWidth="1.100" />, "b"],
  [<Spatter seed={19} n={75} rx={4} ry={15} r={0.7} o={0.5} />, "r"],
  [<path d="m7 6 4 5M4 15l6-4M13 18l7-1M22 11h6M13 24l5-5M5 22l7 4M20 20l5-2M24 25l4-3M27 17l4 2" stroke="#999" strokeWidth="2" strokeLinecap="round" />, "k"],
  [<path d="M2 6c4 5 7 1 7-1M5 5l3 7-4 4 4 2v8l-4 1 7 1 2-6h8l3 7 4-1-3-5 6-8-1-4-3 2H15l-6-2" fill="none" stroke="#999" strokeWidth="1.100" />, "r"],
  [<Spatter seed={22} n={480} rx={16} ry={16} r={0.55} o={0.55} />, "r"],
  [<Spatter seed={23} n={460} rx={16} ry={15} core={1.2} r={1} />, "r"],
  [<path d="m5 4 24-1M4 8l26-1M5 12l22-.500M6 16l24 1M5 20l23-.500M7 24h23M5 28l22-1" stroke="#222" strokeWidth="1.100" />, "k"],
  [<g><circle cx="17" cy="17" r="12" fill="#ddd" /><Spatter seed={25} n={210} rx={13} ry={13} r={1.2} o={0.8} lumps={10} /></g>, "k"],
  [<g><Spatter seed={26} n={130} rx={15} ry={14} r={0.7} o={0.35} /><path d="M6 9c3-7 10-7 12-5l2 7 7 6-3 1-6-5-6-5-5 3z" opacity=".75" /></g>, "k"],
  [<Spatter seed={27} n={130} rx={12} ry={13} r={0.65} o={0.5} lumps={16} />, "k"],
  [<g><ellipse cx="17" cy="16" rx="3.500" ry="10" fill="#bbb" /><Spatter seed={28} n={50} rx={3.500} ry={9} r={0.8} o={0.5} /></g>, "r"],
  [<Spatter seed={29} n={24} rx={2.500} ry={11} r={1.300} o={1} />, "r"],
  [<g><ellipse cx="17" cy="15" rx="3.500" ry="11.500" /><Spatter seed={30} n={70} rx={5} ry={13} r={0.8} /><path d="M17.500 25v7" stroke="#888" strokeWidth="3" /></g>, "R"],
  [<path d="m4 11 18 16M4 6l21 20M8 4l21 19M13 3l18 17M4 16l14 12" stroke="#222" strokeWidth="1.200" />, "k"],
  [<circle cx="17" cy="17" r="1" />, "n"],
  [<g><Soft r={15} g="gray" /><Spatter seed={33} n={120} rx={13} ry={13} o={0.25} /></g>, "k"],
  [<Soft r={15} g="sun" />, "r"],
  [<Spatter seed={35} n={36} rx={15} ry={13} r={1} o={0.95} lumps={12} />, "r"],
  [<Spatter seed={36} n={60} rx={14} ry={12} r={1.100} o={0.9} core={1} />, "r"],
  [<Spatter seed={37} n={480} rx={16} ry={16} r={0.55} o={0.6} />, "k"],
  [<g><Soft r={15} g="gray" /><Spatter seed={38} n={220} rx={14} ry={14} o={0.35} r={0.8} core={0.8} /></g>, "k"],
  [<path d="M8 8v20M15 5l-4 22M20 9v16M27 7l-1 20" stroke="#ccc" strokeDasharray="3 2" />, "r"],
  [<g><Soft r={14} g="gray" /><Spatter seed={40} n={150} rx={12} ry={12} r={1.200} o={0.55} core={1.1} /></g>, "k"],
];

function BrushGrid() {
  return (
    <div className="flex h-[241px] w-[266px] justify-between border border-[#b5b5b3] bg-white">
      <div className="grid auto-rows-[34px] grid-cols-[repeat(7,34px)]">
        {brushes.map(([art, mark], i) => (
          <svg key={i} width="34" height="34" className={i === 9 ? "block outline-1 -outline-offset-1 outline-black" : "block"}>
            {i === 0 && (
              <defs>
                <radialGradient id="soft"><stop stopColor="#000" /><stop offset=".3" stopColor="#000" stopOpacity=".65" /><stop offset=".65" stopOpacity=".2" /><stop offset="1" stopOpacity="0" /></radialGradient>
                <radialGradient id="hard"><stop stopColor="#000" /><stop offset=".45" stopColor="#000" stopOpacity=".95" /><stop offset=".75" stopOpacity=".45" /><stop offset="1" stopOpacity="0" /></radialGradient>
                <radialGradient id="gray"><stop stopColor="#777" stopOpacity=".8" /><stop offset=".6" stopColor="#888" stopOpacity=".5" /><stop offset="1" stopColor="#999" stopOpacity="0" /></radialGradient>
                <radialGradient id="sun"><stop stopColor="#fff7a0" /><stop offset=".4" stopColor="#fbe646" /><stop offset=".55" stopColor="#fdb670" /><stop offset=".75" stopColor="#fdbf9f" /><stop offset="1" stopColor="#fff" stopOpacity="0" /></radialGradient>
              </defs>
            )}
            {art}
            {"bB".includes(mark) && <path d="M33 28v5h-5z" fill="#7d95ff" />}
            {"rR".includes(mark) && <path d="M33 28v5h-5z" fill="#ff7f7f" />}
            {"kbr".includes(mark) && <path d="M30.500 28v5M28 30.500h5" stroke="#000" strokeWidth="1.200" />}
          </svg>
        ))}
      </div>
      <div className="w-[13px] bg-[#c1c3c2] pt-[3px] pl-[4px]">
        <div className="h-[181px] w-[6px] rounded-full bg-[#777b7b]" />
      </div>
    </div>
  );
}

/* ---------- right column ---------- */

function LayerRow({ name, sel, bold, children }: Kids & { name: string; sel?: boolean; bold?: boolean }) {
  return (
    <div className={"flex h-[38px] items-center " + (sel ? "bg-[#4a90d9] text-white" : "text-black")}>
      <div className="w-[83px] pl-[6px]"><Eye /></div>
      <div className={"h-[36px] w-[36px] border-2 " + (sel ? "border-white" : "border-black")}>
        <svg width="32" height="32" className="block" shapeRendering="crispEdges">
          <defs><Checker id="lay" size={4} /></defs>
          <rect width="32" height="32" fill="url(#lay)" />
          {children}
        </svg>
      </div>
      <span className={"pb-[2px] pl-[4px] tracking-[.05px] " + (bold ? "font-bold" : "")}>{name}</span>
    </div>
  );
}

function RightColumn() {
  return (
    <div className="ml-[4px] flex h-[917px] w-[285px] flex-col border-l border-[#b5b5b3] pl-[4px]">
      <div className="flex h-[30px] items-end">
        <div className="z-10 -mb-px flex h-[31px] w-[32px] items-center justify-center rounded-t-[4px] border border-b-0 border-[#b5b5b3] bg-white pb-px">
          <svg width="18" height="18" className="block">
            <rect x=".5" y=".5" width="17" height="17" fill="#fff" stroke="#000" />
            <circle cx="9" cy="9" r="7.700" />
            <path d="M17 11v6h-6z" fill="#7d95ff" />
            <path d="M14 12v5M11.500 14.500h5" stroke="#000" />
          </svg>
        </div>
        <div className="flex h-[28px] w-[27px] items-center justify-center border-t border-r border-[#b5b5b3] bg-[#f0f0f0] pr-[2px]"><Pattern /></div>
        <div className="flex h-[28px] w-[28px] items-center justify-center border-t border-r border-[#b5b5b3] bg-[#f0f0f0] pr-[2px]">
          <span className="flex h-[18px] w-[18px] items-center justify-center border border-black bg-white text-[11px] text-black">Aɑ</span>
        </div>
        <div className="flex h-[28px] w-[26px] items-center justify-center rounded-tr-[4px] border-t border-r border-[#b5b5b3] bg-[#f0f0f0] pr-[2px]"><Picture /></div>
        <div className="flex h-[30px] grow items-center justify-end pr-[8px]"><TabMenu /></div>
      </div>
      <div className="flex h-[391px] flex-col border border-[#b5b5b3] bg-white px-[6px] pt-[4px]">
        <div className="ml-px flex h-[31px] w-[264px] items-center justify-between rounded-[4px] border border-[#b5b5b3] px-[6px] pr-[12px] pb-px text-[#8b8e8f] italic">
          filtr<Caret />
        </div>
        <div className="flex h-[19px] items-center italic">2. Hardness 100 (51 × 51)</div>
        <BrushGrid />
        <div className="mt-[2px] ml-px flex h-[31px] w-[264px] items-center justify-between rounded-[4px] border border-[#b5b5b3] pr-[12px] pb-px pl-[9px] text-black">
          Basic,<Caret />
        </div>
        <div className="mt-[2px] flex h-[25px] w-[266px] border border-[#7d8080] bg-white text-black">
          <div className="flex grow items-center justify-between bg-linear-to-r from-[#4a90d9] from-[10px] to-white to-[10px] pr-[7px] pb-[2px] pl-px">
            <span className="tracking-[.05px]"><span className="text-white">R</span>ozestup</span>
            <span>10.0</span>
          </div>
          <SpinArrows />
        </div>
        <div className="flex h-[32px] items-center pl-[14px]">
          <Edit />
          <div className="pl-[27px]"><NewDoc /></div>
          <div className="pl-[28px]"><Duplicate /></div>
          <div className="pl-[28px]"><Cross c="#a55" d="#445" /></div>
          <div className="pl-[28px]"><Refresh /></div>
          <div className="pl-[30px]"><BrushImg /></div>
        </div>
      </div>
      <div className="mt-[4px] h-px bg-[#b5b5b3]" />
      <div className="flex h-[34px] items-end">
        <div className="z-10 -mb-px flex h-[31px] w-[65px] items-center rounded-t-[4px] border border-b-0 border-[#b5b5b3] bg-white pb-[2px] pl-[5px]"><Layers /><span className="pl-[2px]">Vrstvy</span></div>
        <div className="flex h-[28px] w-[63px] items-center border-t border-r border-[#b5b5b3] bg-[#f0f0f0] pl-[2px]"><Layers top="#e22" mid="#5a3" bot="#36a" /><span className="pl-[2px]">Kanály</span></div>
        <div className="flex h-[28px] w-[56px] items-center rounded-tr-[4px] border-t border-r border-[#b5b5b3] bg-[#f0f0f0] pl-[2px]"><PathTabIcon /><span className="pl-[2px]">Cesty</span></div>
        <div className="flex h-[30px] grow items-center justify-end pr-[8px]"><TabMenu /></div>
      </div>
      <div className="flex grow flex-col border border-[#b5b5b3] bg-white px-[6px] pt-[4px]">
        <div className="ml-px flex h-[28px] gap-[4px]">
          <div className="flex w-[211px] items-center rounded-[3px] border border-[#a9a9a6] bg-linear-to-b from-[#f0f0ef] to-[#d2d2d0] pr-[8px] pl-[7px]">
            <span className="grow pb-px">Režim</span><span className="pr-[10px] pb-px">Normální</span><Caret />
          </div>
          <div className="flex w-[49px] items-center justify-between rounded-[3px] border border-[#a9a9a6] bg-linear-to-b from-[#f0f0ef] to-[#d2d2d0] pr-[8px] pl-[5px]">
            <Reset /><Caret />
          </div>
        </div>
        <div className="mt-[3px] flex h-[25px] w-[266px] border border-[#7d8080] text-white">
          <div className="flex grow items-center justify-between bg-[#4a90d9] pr-[7px] pb-[2px] pl-px"><span>Krytí</span><span>100.0</span></div>
          <SpinArrows dim />
        </div>
        <div className="flex h-[33px] items-center">
          <span className="w-[65px]">Zamknout:</span>
          <Brush />
          <div className="pl-[15px]"><MoveIcon s={16} /></div>
          <div className="pl-[17px]"><CheckIcon /></div>
        </div>
        <div className="flex h-[328px] w-[266px] flex-col border border-[#b5b5b3] bg-white">
          <div className="flex h-[19px] border-b border-[#d9d9d8]">
            <div className="flex w-[30px] items-center justify-center border-r border-[#d9d9d8]"><Ico s={13}><path d="M1 8.500C4 4 12 4 15 8.500 12 12 4 12 1 8.500z" fill="#fff" stroke="#888" strokeWidth="1.300" /><circle cx="8" cy="8" r="3.300" fill="#6d93c5" /><circle cx="8" cy="8" r="1.800" fill="#223" /></Ico></div>
            <div className="flex w-[30px] items-center justify-center border-r border-[#d9d9d8] pr-px"><Chain /></div>
          </div>
          <LayerRow name="červená vrstva" sel><rect x="9" y="8" width="23" height="24" fill="#e50000" /></LayerRow>
          <LayerRow name="zelená vrstva"><rect x="3" y="3" width="27" height="27" fill="#31b64b" /></LayerRow>
          <LayerRow name="Pozadí" bold><rect x="3" y="3" width="27" height="27" fill="#fff" /></LayerRow>
        </div>
        <div className="flex h-[33px] items-center gap-[17px] pb-px pl-[7px]">
          <NewDoc /><Folder /><Up /><Down /><Duplicate /><Merge /><Mask />
          <div className="-ml-[6px] flex h-[26px] w-[31px] items-center justify-center rounded-[2px] border border-[#ddd]"><Cross c="#cc0000" /></div>
        </div>
      </div>
    </div>
  );
}

export default function App() {
  return (
    <div className="h-[944px] w-[1239px] overflow-hidden bg-[#e8e8e6] font-['Noto_Sans',sans-serif] text-[11px] leading-[15px] text-[#2e3436]">
      <div className="flex h-[27px] items-center border-b border-[#cfcfcd] pt-[2px] pl-2 text-[13px] tracking-[.05px]">
        <span className="w-[60px]">Soubor</span>
        <span className="w-[61px]">Upravit</span>
        <span className="w-[56px]">Vybrat</span>
        <span className="w-[77px]">Zobrazení</span>
        <span className="w-[67px]">Obrázek</span>
        <span className="w-[54px]">Vrstva</span>
        <span className="w-[51px]">Barvy</span>
        <span className="w-[68px]">Nástroje</span>
        <span className="w-[46px]">Filtry</span>
        <span className="w-[48px]">Okna</span>
        <span>Nápověda</span>
      </div>
      <div className="flex">
        <ToolColumn />
        <ImageWindow />
        <RightColumn />
      </div>
    </div>
  );
}
